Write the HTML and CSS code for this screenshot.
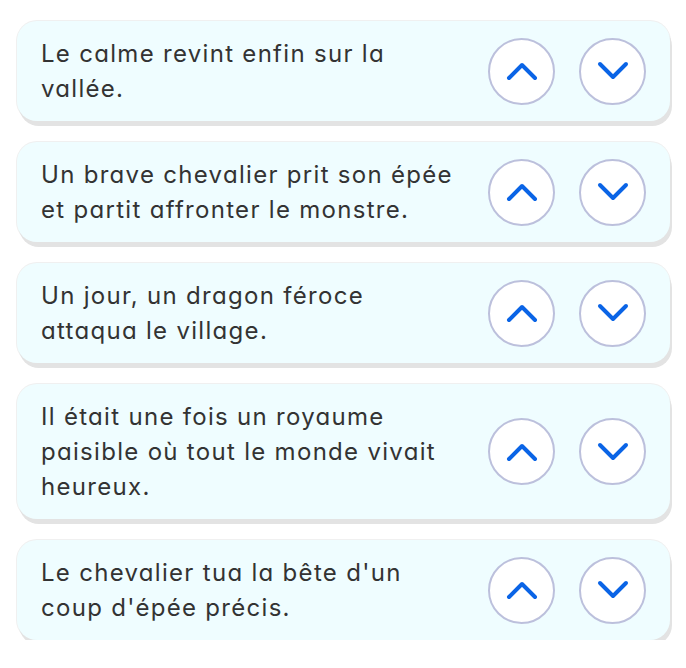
FILE: index.html
```html
<!DOCTYPE html>
<html lang="fr">
<head>
<meta charset="utf-8">
<link rel="stylesheet" href="styles.css">
</head>
<body>
<main class="list">
  <div class="card">
    <p class="text">Le calme revint enfin sur la vallée.</p>
    <div class="actions">
      <button class="btn"><svg viewBox="0 0 32 20" width="32" height="20"><path d="M3 17L16 4L29 17"/></svg></button>
      <button class="btn"><svg viewBox="0 0 32 20" width="32" height="20"><path d="M3 3L16 16L29 3"/></svg></button>
    </div>
  </div>
  <div class="card">
    <p class="text">Un brave chevalier prit son épée et partit affronter le monstre.</p>
    <div class="actions">
      <button class="btn"><svg viewBox="0 0 32 20" width="32" height="20"><path d="M3 17L16 4L29 17"/></svg></button>
      <button class="btn"><svg viewBox="0 0 32 20" width="32" height="20"><path d="M3 3L16 16L29 3"/></svg></button>
    </div>
  </div>
  <div class="card">
    <p class="text">Un jour, un dragon féroce attaqua le village.</p>
    <div class="actions">
      <button class="btn"><svg viewBox="0 0 32 20" width="32" height="20"><path d="M3 17L16 4L29 17"/></svg></button>
      <button class="btn"><svg viewBox="0 0 32 20" width="32" height="20"><path d="M3 3L16 16L29 3"/></svg></button>
    </div>
  </div>
  <div class="card">
    <p class="text">Il était une fois un royaume paisible où tout le monde vivait heureux.</p>
    <div class="actions">
      <button class="btn"><svg viewBox="0 0 32 20" width="32" height="20"><path d="M3 17L16 4L29 17"/></svg></button>
      <button class="btn"><svg viewBox="0 0 32 20" width="32" height="20"><path d="M3 3L16 16L29 3"/></svg></button>
    </div>
  </div>
  <div class="card">
    <p class="text">Le chevalier tua la bête d'un coup d'épée précis.</p>
    <div class="actions">
      <button class="btn"><svg viewBox="0 0 32 20" width="32" height="20"><path d="M3 17L16 4L29 17"/></svg></button>
      <button class="btn"><svg viewBox="0 0 32 20" width="32" height="20"><path d="M3 3L16 16L29 3"/></svg></button>
    </div>
  </div>
</main>
</body>
</html>
```
FILE: styles.css
```css
html, body {
  margin: 0;
  padding: 0;
  background: #ffffff;
}
.list {
  display: flex;
  flex-direction: column;
  gap: 21px;
  padding: 21px 16px 0 17px;
}
.card {
  display: flex;
  align-items: center;
  justify-content: space-between;
  background: #effdff;
  border-radius: 20px;
  padding: 15px 24px 15px 24px;
  box-shadow: 2px 5px 0 #e3e3e3, 0 0 0 1px #f0f0f0;
}
.text {
  margin: 0;
  width: 422px;
  font-family: Inter, "Noto Sans", sans-serif;
  font-feature-settings: "cv11" 1;
  font-size: 24px;
  font-weight: 400;
  letter-spacing: 1.3px;
  line-height: 35px;
  color: #333333;
}
.actions {
  display: flex;
  gap: 24px;
}
.btn {
  width: 67px;
  height: 67px;
  padding: 0;
  border-radius: 50%;
  border: 2px solid #bcc0dc;
  background: #ffffff;
  display: flex;
  align-items: center;
  justify-content: center;
  cursor: pointer;
}
.btn svg {
  display: block;
  fill: none;
  stroke: #0a64e6;
  stroke-width: 4;
  stroke-linecap: round;
  stroke-linejoin: round;
}
```
